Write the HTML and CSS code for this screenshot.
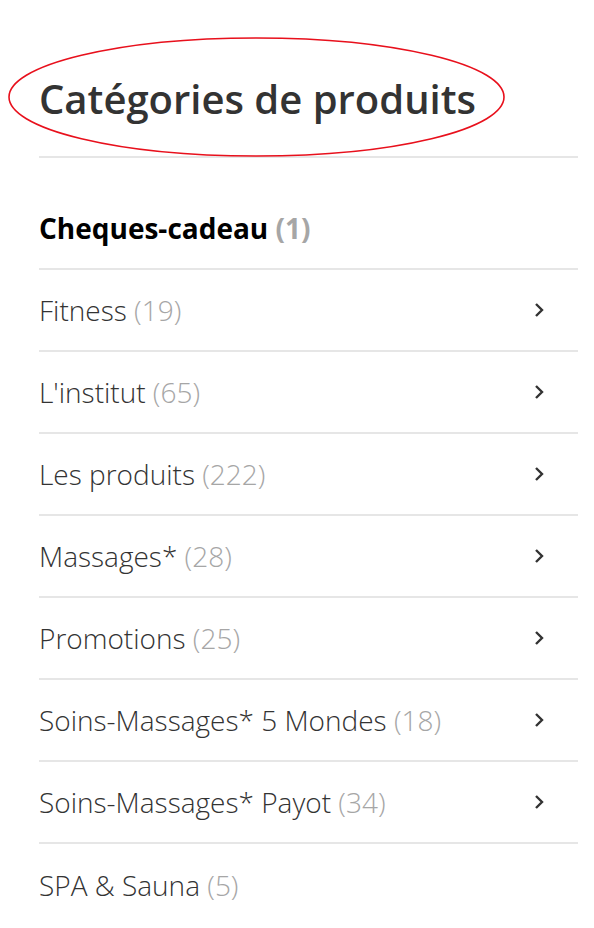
FILE: index.html
```html
<!DOCTYPE html>
<html lang="fr">
<head>
    <meta charset="UTF-8">
    <title>Catégories de produits</title>
    <link rel="stylesheet" href="styles.css">
</head>
<body>
    <div class="widget">
        <div class="widget-head">
            <h2 class="widget-title">Catégories de produits</h2>
            <svg class="circled" width="500" height="122" viewBox="0 0 500 122">
                <ellipse cx="248.5" cy="60" rx="247.5" ry="59" fill="none" stroke="#e8101c" stroke-width="1.6"/>
            </svg>
        </div>
        <ul class="cat-list">
            <li class="cat-item current"><span class="cat-name">Cheques-cadeau <span class="count">(1)</span></span></li>
            <li class="cat-item"><span class="cat-name">Fitness <span class="count">(19)</span></span><svg class="arrow" width="10" height="16" viewBox="0 0 10 16"><polyline points="2,2 8,8 2,14" fill="none" stroke="#333" stroke-width="2.4"/></svg></li>
            <li class="cat-item"><span class="cat-name">L'institut <span class="count">(65)</span></span><svg class="arrow" width="10" height="16" viewBox="0 0 10 16"><polyline points="2,2 8,8 2,14" fill="none" stroke="#333" stroke-width="2.4"/></svg></li>
            <li class="cat-item"><span class="cat-name">Les produits <span class="count">(222)</span></span><svg class="arrow" width="10" height="16" viewBox="0 0 10 16"><polyline points="2,2 8,8 2,14" fill="none" stroke="#333" stroke-width="2.4"/></svg></li>
            <li class="cat-item"><span class="cat-name">Massages* <span class="count">(28)</span></span><svg class="arrow" width="10" height="16" viewBox="0 0 10 16"><polyline points="2,2 8,8 2,14" fill="none" stroke="#333" stroke-width="2.4"/></svg></li>
            <li class="cat-item"><span class="cat-name">Promotions <span class="count">(25)</span></span><svg class="arrow" width="10" height="16" viewBox="0 0 10 16"><polyline points="2,2 8,8 2,14" fill="none" stroke="#333" stroke-width="2.4"/></svg></li>
            <li class="cat-item"><span class="cat-name">Soins-Massages* 5 Mondes <span class="count">(18)</span></span><svg class="arrow" width="10" height="16" viewBox="0 0 10 16"><polyline points="2,2 8,8 2,14" fill="none" stroke="#333" stroke-width="2.4"/></svg></li>
            <li class="cat-item"><span class="cat-name">Soins-Massages* Payot <span class="count">(34)</span></span><svg class="arrow" width="10" height="16" viewBox="0 0 10 16"><polyline points="2,2 8,8 2,14" fill="none" stroke="#333" stroke-width="2.4"/></svg></li>
            <li class="cat-item"><span class="cat-name">SPA &amp; Sauna <span class="count">(5)</span></span></li>
        </ul>
    </div>
</body>
</html>
```

FILE: styles.css
```css
* {
    padding: 0;
    margin: 0;
    box-sizing: border-box;
}

body {
    background-color: #ffffff;
    font-family: 'Open Sans', 'Liberation Sans', sans-serif;
    color: #333333;
}

.widget {
    width: 539px;
    margin-left: 39px;
    padding-top: 38px;
}

.widget-head {
    position: relative;
    border-bottom: 2px solid #e6e6e6;
    padding: 38px 0 34px 0;
}

.widget-title {
    font-size: 40px;
    font-weight: 600;
    line-height: 46px;
    color: #333333;
}

.circled {
    position: absolute;
    left: -31px;
    top: -1px;
}

.cat-list {
    list-style: none;
    padding-top: 30px;
}

.cat-item {
    display: flex;
    align-items: center;
    height: 82px;
    border-bottom: 2px solid #e6e6e6;
    font-size: 28px;
    font-weight: 300;
    color: #333333;
}

.cat-item:last-child {
    border-bottom: none;
}

.cat-item.current .cat-name {
    font-weight: 700;
    color: #000000;
}

.count {
    color: #a6a6a6;
}

.arrow {
    margin-left: auto;
    margin-right: 34px;
}
```
